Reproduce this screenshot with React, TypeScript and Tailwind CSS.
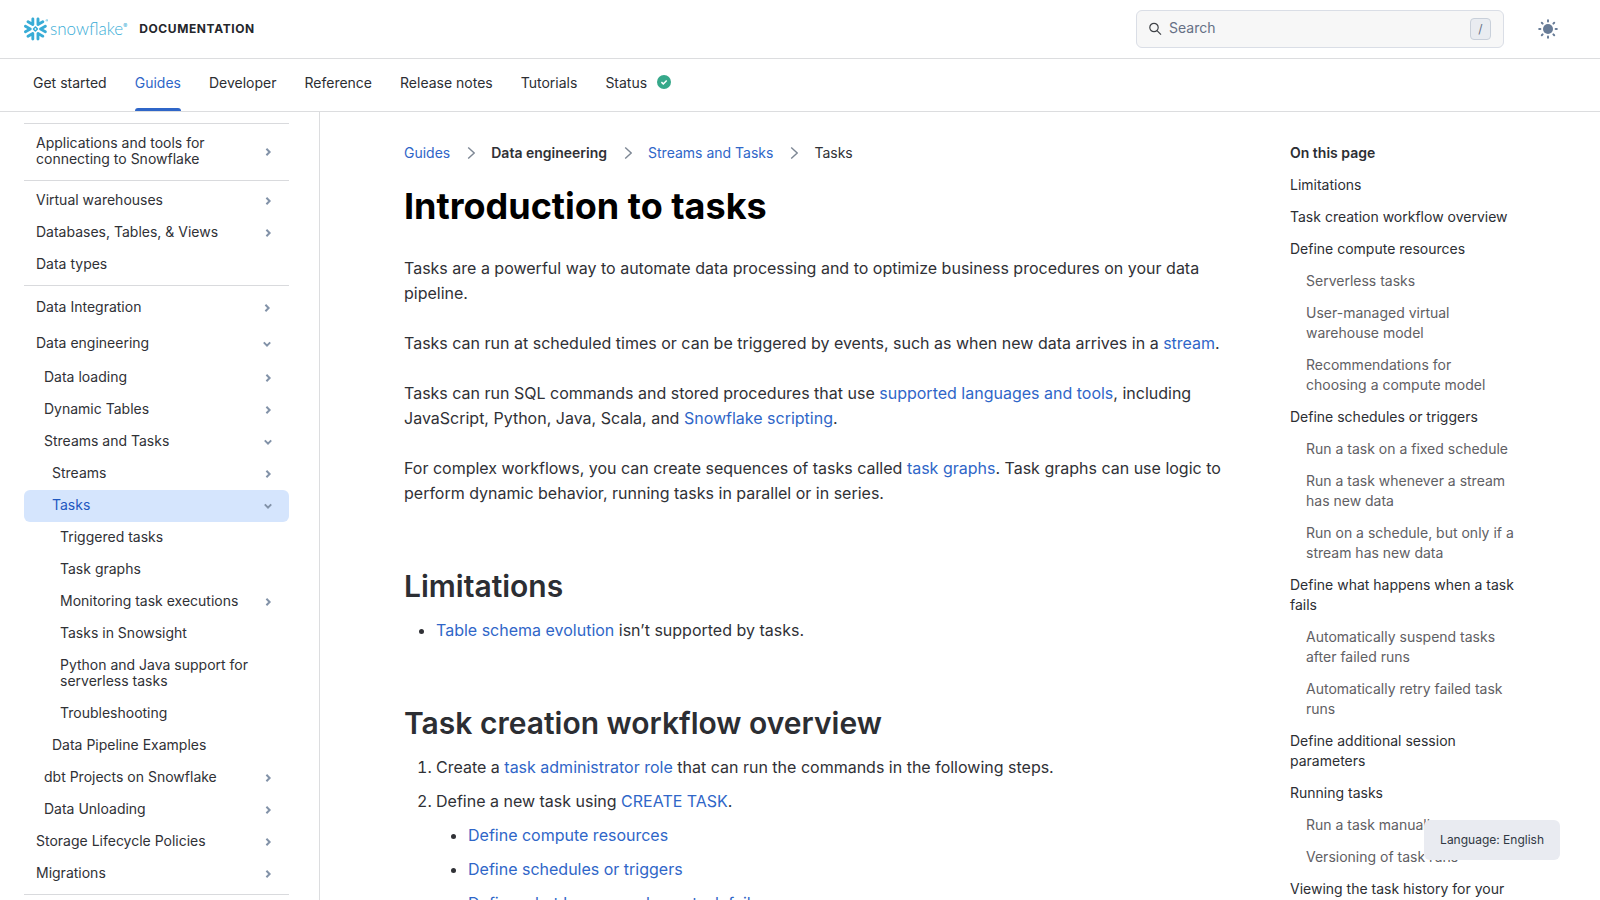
import React from "react";
import { SiSnowflake } from "react-icons/si";

interface NavItem {
  label: string;
  level?: number;
  state?: "open" | "closed";
  active?: boolean;
  tall?: boolean;
}

interface TocItem {
  label: string;
  nested?: boolean;
}

const tabs = ["Get started", "Guides", "Developer", "Reference", "Release notes", "Tutorials"];

// Each group is closed off by a divider
const navGroups: NavItem[][] = [
  [{ label: "Applications and tools for connecting to Snowflake", state: "closed" }],
  [
    { label: "Virtual warehouses", state: "closed" },
    { label: "Databases, Tables, & Views", state: "closed" },
    { label: "Data types" },
  ],
  [
    { label: "Data Integration", state: "closed", tall: true },
    { label: "Data engineering", state: "open", tall: true },
    { label: "Data loading", level: 1, state: "closed" },
    { label: "Dynamic Tables", level: 1, state: "closed" },
    { label: "Streams and Tasks", level: 1, state: "open" },
    { label: "Streams", level: 2, state: "closed" },
    { label: "Tasks", level: 2, state: "open", active: true },
    { label: "Triggered tasks", level: 3 },
    { label: "Task graphs", level: 3 },
    { label: "Monitoring task executions", level: 3, state: "closed" },
    { label: "Tasks in Snowsight", level: 3 },
    { label: "Python and Java support for serverless tasks", level: 3 },
    { label: "Troubleshooting", level: 3 },
    { label: "Data Pipeline Examples", level: 2 },
    { label: "dbt Projects on Snowflake", level: 1, state: "closed" },
    { label: "Data Unloading", level: 1, state: "closed" },
    { label: "Storage Lifecycle Policies", state: "closed" },
    { label: "Migrations", state: "closed" },
  ],
];

const toc: TocItem[] = [
  { label: "Limitations" },
  { label: "Task creation workflow overview" },
  { label: "Define compute resources" },
  { label: "Serverless tasks", nested: true },
  { label: "User-managed virtual warehouse model", nested: true },
  { label: "Recommendations for choosing a compute model", nested: true },
  { label: "Define schedules or triggers" },
  { label: "Run a task on a fixed schedule", nested: true },
  { label: "Run a task whenever a stream has new data", nested: true },
  { label: "Run on a schedule, but only if a stream has new data", nested: true },
  { label: "Define what happens when a task fails" },
  { label: "Automatically suspend tasks after failed runs", nested: true },
  { label: "Automatically retry failed task runs", nested: true },
  { label: "Define additional session parameters" },
  { label: "Running tasks" },
  { label: "Run a task manually", nested: true },
  { label: "Versioning of task runs", nested: true },
  { label: "Viewing the task history for your account" },
];

const indent = ["pl-3", "pl-5", "pl-7", "pl-9"];

const Link: React.FC<{ children: React.ReactNode }> = ({ children }) => (
  <a href="#" className="text-[#2f66c8] hover:underline">
    {children}
  </a>
);

const Logo = () => (
  <a href="#" aria-label="Snowflake" className="flex items-center text-[#38acd6]">
    <SiSnowflake className="size-6" />
    <span className="ml-0.5 font-[Lato] text-[17px] leading-6 font-light">snowflake</span>
    <span className="-mt-2 text-[6px]">®</span>
  </a>
);

const Chevron: React.FC<{ open: boolean }> = ({ open }) => (
  <svg viewBox="0 0 10 10" className={`size-2.5 shrink-0 ${open ? "rotate-90" : ""}`} fill="none" stroke="#8292a8" strokeWidth="2">
    <path d="M3.4 1.8 L6.6 5 L3.4 8.2" />
  </svg>
);

const NavRow: React.FC<{ item: NavItem }> = ({ item }) => (
  <li>
    <a
      href="#"
      aria-current={item.active ? "page" : undefined}
      className={`flex items-center justify-between rounded-md text-sm leading-4 ${indent[item.level ?? 0]} ${
        item.tall ? "py-[9px] pr-[17px]" : "py-[7px] pr-4"
      } ${item.active ? "bg-[#d5e5fd] text-[#1f58c0]" : "text-[#303136]"}`}>
      <span className="max-w-[196px] pb-0.5">{item.label}</span>
      {item.state && <Chevron open={item.state === "open"} />}
    </a>
  </li>
);

const Separator = () => (
  <svg viewBox="0 0 9 12" className="h-3 w-[9px] shrink-0" fill="none" stroke="#7d8794" strokeWidth="1.4" aria-hidden="true">
    <path d="M2.2 0.5 L8.2 6 L2.2 11.5" />
  </svg>
);

const Header = () => (
  <header className="flex items-center justify-between border-b border-[#dcdddf] py-2.5 pr-[42px] pl-6">
    <div className="flex items-center gap-3">
      <Logo />
      <span className="text-xs font-bold tracking-wider text-[#24262b]">DOCUMENTATION</span>
    </div>
    <div className="flex items-center gap-[34px]">
      <label className="flex h-[38px] w-[368px] items-center rounded-md border border-[#dadee6] bg-[#f7f7f7] pr-3 pl-3">
        <svg viewBox="0 0 14 14" className="size-3.5" fill="none" stroke="#3f4247" strokeWidth="1.2">
          <circle cx="5" cy="5.5" r="4.2" />
          <path d="M8 8.6 L12 12.6" />
        </svg>
        <input
          type="search"
          aria-label="Search"
          placeholder="Search"
          className="ml-1.5 min-w-0 flex-1 bg-transparent pb-0.5 text-sm outline-none placeholder:text-[#667085]"
        />
        <kbd className="flex h-[22px] w-[21px] items-center justify-center rounded border border-[#c9d0da] bg-[#e9ecf1] font-[Inter] text-xs text-[#667085]">
          /
        </kbd>
      </label>
      <button type="button" aria-label="Toggle theme" className="text-[#687c97]">
        <svg viewBox="0 0 20 20" className="size-5" stroke="currentColor" strokeWidth="2" strokeLinecap="round">
          <circle cx="10" cy="10" r="5" fill="currentColor" stroke="none" />
          {[0, 45, 90, 135, 180, 225, 270, 315].map((deg) => (
            <path key={deg} d="M10 1.2 V2.4" transform={`rotate(${deg} 10 10)`} />
          ))}
        </svg>
      </button>
    </div>
  </header>
);

const Tabs = () => (
  <nav className="flex h-[53px] gap-7 border-b border-[#dcdddf] pr-8 pl-[33px] text-sm text-[#2c2e33]">
    {tabs.map((tab) => (
      <a
        key={tab}
        href="#"
        className={`relative pt-3.5 ${tab === "Guides" ? "text-[#2f66c8]" : ""}`}>
        {tab}
        {tab === "Guides" && <span className="absolute inset-x-0 bottom-0 h-[3px] rounded-t-sm bg-[#2f66c8]" />}
      </a>
    ))}
    <a href="#" className="flex items-start gap-2.5 pt-3.5">
      Status
      <svg viewBox="0 0 14 14" className="mt-0.5 size-3.5">
        <circle cx="7" cy="7" r="7" fill="#36a88a" />
        <path d="M4.4 7.1 L6.3 8.9 L9.7 5.4" fill="none" stroke="#fff" strokeWidth="1.5" />
      </svg>
    </a>
  </nav>
);

const Sidebar = () => (
  <nav aria-label="Guides" className="w-80 shrink-0 overflow-y-auto border-r border-[#dcdddf] pt-[11px] pr-[30px] pl-6 [scrollbar-width:none]">
    <div className="border-t border-[#d9dadd]">
      {navGroups.map((group, i) => (
        <ul key={i} className="border-b border-[#d9dadd] py-1">
          {group.map((item) => (
            <NavRow key={item.label} item={item} />
          ))}
        </ul>
      ))}
    </div>
  </nav>
);

const Article = () => (
  <article className="min-w-0 flex-1 text-base leading-[25px] text-[#303136]">
    <nav aria-label="Breadcrumb" className="flex items-center gap-4 text-sm leading-5">
      <Link>Guides</Link>
      <Separator />
      <span className="font-semibold">Data engineering</span>
      <Separator />
      <Link>Streams and Tasks</Link>
      <Separator />
      <span>Tasks</span>
    </nav>

    <h1 className="mt-[21px] text-4xl leading-[44px] font-bold text-black">Introduction to tasks</h1>

    <div className="mt-7 space-y-[25px]">
      <p>
        Tasks are a powerful way to automate data processing and to optimize business procedures on your data pipeline.
      </p>
      <p>
        Tasks can run at scheduled times or can be triggered by events, such as when new data arrives in a <Link>stream</Link>.
      </p>
      <p>
        Tasks can run SQL commands and stored procedures that use <Link>supported languages and tools</Link>, including
        JavaScript, Python, Java, Scala, and <Link>Snowflake scripting</Link>.
      </p>
      <p>
        For complex workflows, you can create sequences of tasks called <Link>task graphs</Link>. Task graphs can use
        logic to perform dynamic behavior, running tasks in parallel or in series.
      </p>
    </div>

    <h2 className="mt-[60px] text-3xl leading-10 font-semibold text-[#2c2e33]">Limitations</h2>
    <ul className="mt-3 list-disc pl-8">
      <li>
        <Link>Table schema evolution</Link> isn’t supported by tasks.
      </li>
    </ul>

    <h2 className="mt-[60px] text-3xl leading-10 font-semibold text-[#2c2e33]">Task creation workflow overview</h2>
    <ol className="mt-3 list-decimal space-y-[9px] pl-8">
      <li>
        Create a <Link>task administrator role</Link> that can run the commands in the following steps.
      </li>
      <li>
        Define a new task using <Link>CREATE TASK</Link>.
        <ul className="mt-[9px] list-disc space-y-[9px] pl-8">
          <li><Link>Define compute resources</Link></li>
          <li><Link>Define schedules or triggers</Link></li>
          <li><Link>Define what happens when a task fails</Link></li>
          <li><Link>Define additional session parameters</Link></li>
        </ul>
      </li>
    </ol>
  </article>
);

const OnThisPage = () => (
  <aside className="w-[225px] shrink-0 text-sm leading-5">
    <p className="font-semibold text-[#2c2e33]">On this page</p>
    <ul className="mt-3 space-y-3">
      {toc.map((item) => (
        <li key={item.label} className={item.nested ? "pl-4 text-[#5f6064]" : "text-[#2c2e33]"}>
          <a href="#">{item.label}</a>
        </li>
      ))}
    </ul>
  </aside>
);

const App = () => {
  return (
    <div className="flex h-screen flex-col bg-white font-[Inter,sans-serif]">
      <Header />
      <Tabs />
      <div className="flex min-h-0 flex-1">
        <Sidebar />
        <main className="min-w-0 flex-1 overflow-y-auto [scrollbar-width:none]">
          <div className="flex items-start gap-[68px] pt-[31px] pr-[85px] pb-7 pl-[84px]">
            <Article />
            <OnThisPage />
          </div>
        </main>
      </div>
      <button type="button" className="fixed right-10 bottom-10 h-10 rounded-md bg-[#e9ebf1] px-4 text-xs text-[#303743]">
        Language: English
      </button>
    </div>
  );
};

export default App;
